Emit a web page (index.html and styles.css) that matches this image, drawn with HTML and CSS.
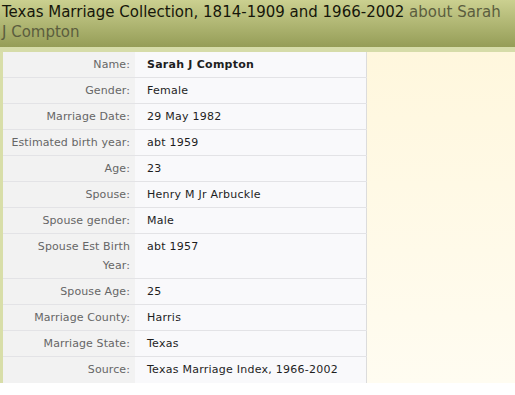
FILE: index.html
```html
<!DOCTYPE html>
<html>
<head>
<meta charset="utf-8">
<link rel="stylesheet" href="styles.css">
</head>
<body>
<div class="page">
  <h1 class="title"><span class="coll">Texas Marriage Collection, 1814-1909 and 1966-2002</span> <span class="about">about Sarah</span> <span class="about">J Compton</span></h1>
  <div class="strip"></div>
  <div class="main">
    <table class="details">
      <tr><td class="label">Name:</td><td class="value strong">Sarah J Compton</td></tr>
      <tr><td class="label">Gender:</td><td class="value">Female</td></tr>
      <tr><td class="label">Marriage Date:</td><td class="value">29 May 1982</td></tr>
      <tr><td class="label">Estimated birth year:</td><td class="value">abt 1959</td></tr>
      <tr><td class="label">Age:</td><td class="value">23</td></tr>
      <tr><td class="label">Spouse:</td><td class="value">Henry M Jr Arbuckle</td></tr>
      <tr><td class="label">Spouse gender:</td><td class="value">Male</td></tr>
      <tr><td class="label">Spouse Est Birth Year:</td><td class="value">abt 1957</td></tr>
      <tr><td class="label">Spouse Age:</td><td class="value">25</td></tr>
      <tr><td class="label">Marriage County:</td><td class="value">Harris</td></tr>
      <tr><td class="label">Marriage State:</td><td class="value">Texas</td></tr>
      <tr><td class="label">Source:</td><td class="value">Texas Marriage Index, 1966-2002</td></tr>
    </table>
    <div class="aside"></div>
  </div>
</div>
</body>
</html>
```
FILE: styles.css
```css
html, body {
  margin: 0;
  padding: 0;
  background: #ffffff;
}
body {
  font-family: "DejaVu Sans", sans-serif;
}
.page {
  width: 515px;
}
.title {
  margin: 0;
  height: 47px;
  box-sizing: border-box;
  padding: 2px 12px 0 2px;
  font-size: 15px;
  line-height: 20px;
  font-weight: normal;
  color: #16160a;
  background: linear-gradient(#cbd090, #959d57);
}
.coll {
  color: #16160a;
}
.about {
  color: #5b5d3e;
}
.strip {
  height: 5px;
  background: #d6dca9;
}
.main {
  display: flex;
  border-left: 3px solid #d8dea9;
}
.details {
  width: 364px;
  border-collapse: collapse;
  table-layout: fixed;
  border-right: 1px solid #dcdcdc;
  font-size: 11px;
  letter-spacing: 0.25px;
}
.details td {
  padding: 3px 0 3px;
  line-height: 19px;
  vertical-align: top;
  border-bottom: 1px solid #e3e3e6;
}
.details tr:last-child td {
  border-bottom: none;
  padding-bottom: 4px;
}
.details td.label {
  width: 121px;
  padding-left: 6px;
  padding-right: 5px;
  text-align: right;
  letter-spacing: 0.1px;
  color: #666666;
  background: #f2f2f2;
}
.details td.value {
  padding-left: 12px;
  color: #1e1e1e;
  background: #f9f9fb;
}
.strong {
  font-weight: bold;
}
.aside {
  flex: 1;
  background: linear-gradient(#fff7dd, #fffcf1);
}
```
